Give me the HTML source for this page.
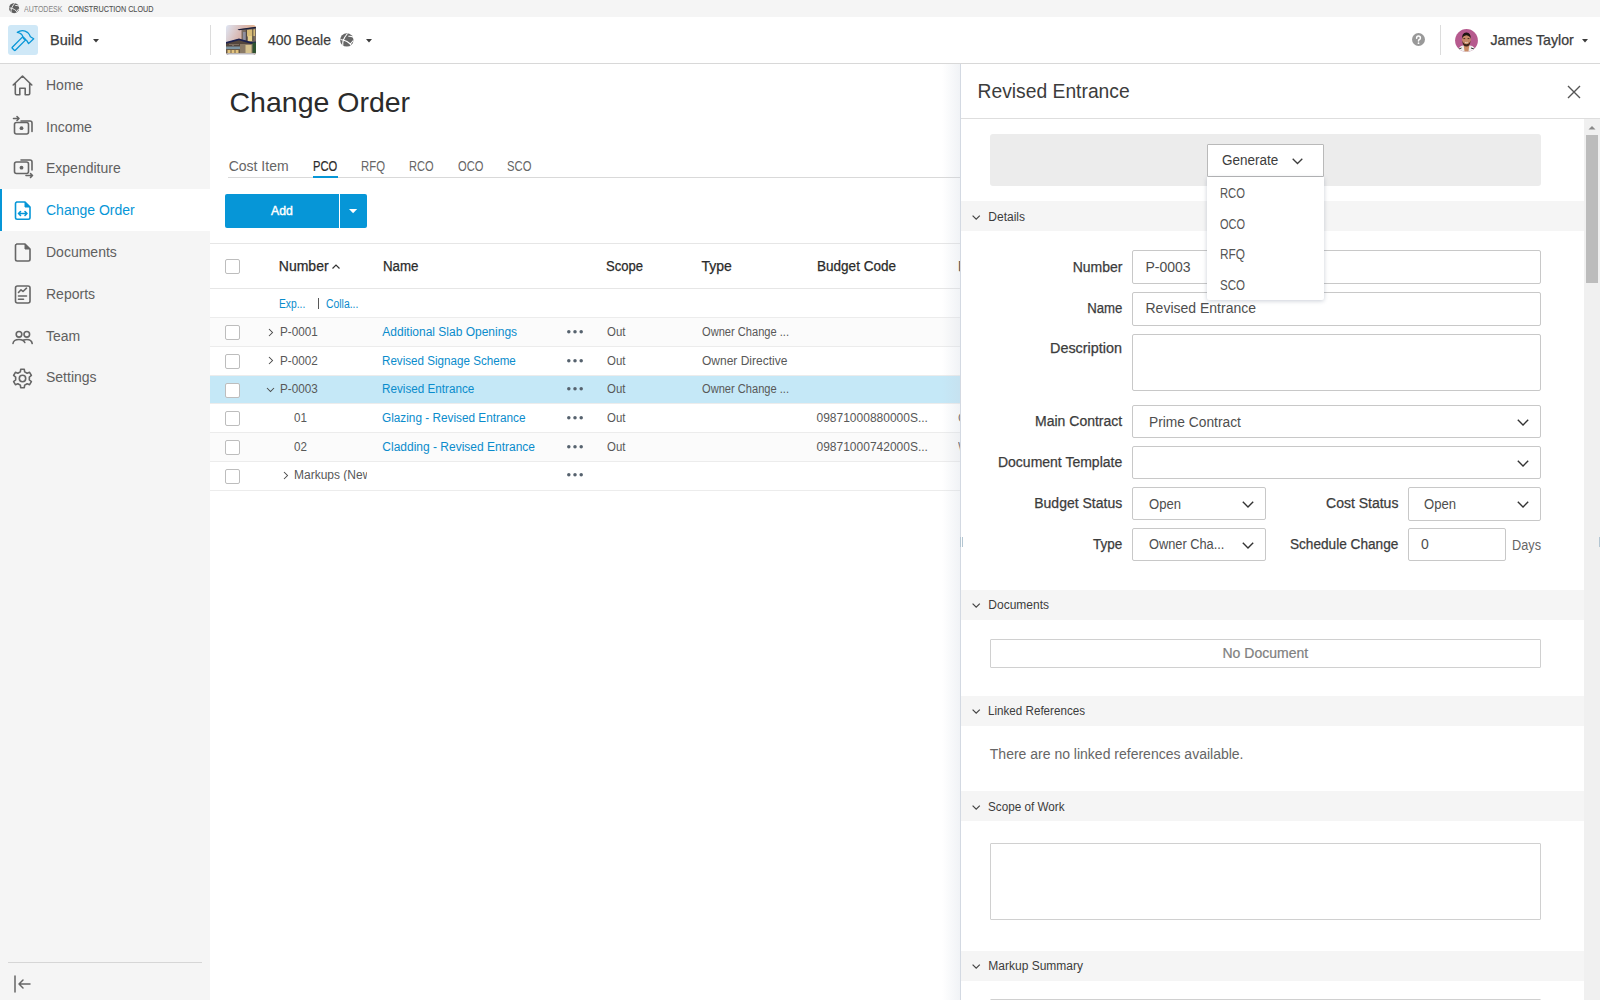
<!DOCTYPE html>
<html><head><meta charset="utf-8">
<style>
*{box-sizing:border-box;margin:0;padding:0}
html,body{width:1600px;height:1000px;overflow:hidden;background:#fff;font-family:"Liberation Sans",sans-serif;color:#3c3c3c}
.a{position:absolute}
.t{white-space:nowrap;line-height:1}
svg.a{overflow:visible}
</style></head>
<body>
<div class="a" style="left:0.00px;top:0.00px;width:1600.00px;height:17.00px;background:#f5f5f5;"></div>
<svg class="a" style="left:8.80px;top:3.00px;" width="11" height="11" viewBox="0 0 11 11"><g transform="scale(0.75)"><circle cx="6.8" cy="6.9" r="6.7" fill="#5e5e5e"/><path d="M7.5 0.5 Q4.5 4 3.2 7.5 Q2.5 10 2.8 12.5 M0.5 6.5 Q4 6.8 7 8.5 Q9.5 10 11.5 12.5 M8.3 3.3 Q11 3 13.3 4.2 M10 11.5 Q12 9 13.3 7.5" stroke="#f5f5f5" stroke-width="1.2" fill="none"/></g></svg>
<div class="a t" style="top:4.72px;font-size:8.60px;color:#858585;left:24.00px;transform:scaleX(0.8165);transform-origin:0 0;">AUTODESK</div>
<div class="a t" style="top:4.72px;font-size:8.60px;color:#505050;-webkit-text-stroke:0.10px #505050;left:67.50px;transform:scaleX(0.8401);transform-origin:0 0;">CONSTRUCTION CLOUD</div>
<div class="a" style="left:0.00px;top:17.00px;width:1600.00px;height:46.00px;background:#fff;"></div>
<div class="a" style="left:0.00px;top:63.00px;width:1600.00px;height:1.00px;background:#d8d8d8;"></div>
<div class="a" style="left:8.00px;top:25.00px;width:30.00px;height:30.00px;background:#cfe8f7;border-radius:3px;"></div>
<svg class="a" style="left:8.00px;top:25.00px;" width="30" height="30" viewBox="0 0 30 30"><path d="M4.3 22.2 L14.4 12.1 Q14.9 11.6 15.4 12.1 L17.4 14.1 Q17.9 14.6 17.4 15.1 L7.3 25.2 Q6.8 25.7 6.3 25.2 L4.3 23.2 Q3.8 22.7 4.3 22.2 Z" stroke="#0696d7" stroke-width="1.3" fill="none" stroke-linejoin="round"/><path d="M9.3 7.4 Q14.5 3.8 19.8 7.6 Q21.6 9.3 22.4 11.8 L25.7 13.8 L20.6 18.6 L18.6 15.3 Q15.4 14.8 14.9 12 Q14.2 8.3 9.3 7.4 Z" stroke="#0696d7" stroke-width="1.3" fill="none" stroke-linejoin="round"/></svg>
<div class="a t" style="top:32.83px;font-size:14.50px;color:#3c3c3c;-webkit-text-stroke:0.25px #3c3c3c;left:50.00px;">Build</div>
<svg class="a" style="left:93.00px;top:38.50px;" width="6" height="4" viewBox="0 0 6 4"><path d="M0 0 L6 0 L3 3.5 Z" fill="#3c3c3c"/></svg>
<div class="a" style="left:210.00px;top:25.00px;width:1.00px;height:30.00px;background:#dcdcdc;"></div>
<svg class="a" style="left:226.00px;top:25.00px;" width="30" height="30" viewBox="0 0 30 30"><defs><linearGradient id="sky" x1="0" y1="0" x2="1" y2="0.5"><stop offset="0" stop-color="#dfe6f4"/><stop offset="0.5" stop-color="#d9b7b0"/><stop offset="1" stop-color="#e9b27a"/></linearGradient><clipPath id="thc"><rect x="0" y="0" width="30" height="30" rx="3"/></clipPath></defs><g clip-path="url(#thc)"><rect x="0" y="0" width="30" height="30" fill="url(#sky)"/><path d="M15.5 4 L30 2 L30 17 L15.5 17 Z" fill="#7a6c62"/><path d="M21 5 L29 4.2 L29 11 L21 11.5 Z" fill="#d8bc78"/><path d="M22 11 L26.5 11 L26.5 16 L22 16 Z" fill="#e6d08a"/><path d="M17 7 L20 7 L20 15 L17 15 Z" fill="#8e8e9e"/><path d="M20.3 4.5 V16 M26.8 3.5 V16" stroke="#3a3230" stroke-width="0.8"/><path d="M11.5 4.2 L30 1.8 L30 3.3 L13 5.2 Z" fill="#1a1d3a"/><path d="M0 17.5 L13 14 L25 17.5 L30 17 L30 30 L0 30 Z" fill="#54463c"/><path d="M0 17 L13 13.5 L25 17 L30 16.5 L30 18.3 L25 18.7 L13 15.2 L0 18.8 Z" fill="#1c2250"/><path d="M3 19.5 H13 M6 20.5 H8" stroke="#9a8a7a" stroke-width="0.6"/><path d="M0 21.5 L14 21.5 L14 24 L0 24 Z" fill="#7c94a2"/><path d="M0 24 L14 24 L14 28.5 L0 28.5 Z" fill="#6a5a48"/><path d="M1.5 25 H4.5 V28 H1.5 Z M5.5 25 H8.5 V28 H5.5 Z M9.5 25 H12.5 V28 H9.5 Z" fill="#e2c27c"/><path d="M14 19 L30 19 L30 28.5 L14 28.5 Z" fill="#8a7a66"/><path d="M19.5 20 L25.5 20 L25.5 28 L19.5 28 Z" fill="#d6c28e"/><path d="M26.5 17.5 L30 17.5 L30 28 L26.5 28 Z" fill="#2f5230"/><rect x="0" y="28.3" width="30" height="1.7" fill="#dcdce2"/></g></svg>
<div class="a t" style="top:32.93px;font-size:14.50px;color:#3c3c3c;-webkit-text-stroke:0.25px #3c3c3c;left:267.50px;transform:scaleX(0.9647);transform-origin:0 0;">400 Beale</div>
<svg class="a" style="left:340.00px;top:33.00px;" width="14" height="14" viewBox="0 0 14 14"><circle cx="6.8" cy="6.9" r="6.7" fill="#666"/><path d="M7.5 0.5 Q4.5 4 3.2 7.5 Q2.5 10 2.8 12.5 M0.5 6.5 Q4 6.8 7 8.5 Q9.5 10 11.5 12.5 M8.3 3.3 Q11 3 13.3 4.2 M10 11.5 Q12 9 13.3 7.5" stroke="#fff" stroke-width="1.1" fill="none"/></svg>
<svg class="a" style="left:366.00px;top:38.50px;" width="6" height="4" viewBox="0 0 6 4"><path d="M0 0 L6 0 L3 3.5 Z" fill="#3c3c3c"/></svg>
<svg class="a" style="left:1411.50px;top:33.30px;" width="13" height="13" viewBox="0 0 13 13"><circle cx="6.5" cy="6.5" r="6.5" fill="#999"/><path d="M4.6 5.2 Q4.6 3 6.5 3 Q8.4 3 8.4 4.9 Q8.4 6.1 7.1 6.7 Q6.5 7 6.5 8" stroke="#fff" stroke-width="1.5" fill="none" stroke-linecap="round"/><circle cx="6.5" cy="10.2" r="0.9" fill="#fff"/></svg>
<div class="a" style="left:1440.00px;top:25.00px;width:1.00px;height:30.00px;background:#dcdcdc;"></div>
<svg class="a" style="left:1455.30px;top:28.70px;" width="23" height="23" viewBox="0 0 23 23"><defs><clipPath id="avc"><circle cx="11.5" cy="11.5" r="11.4"/></clipPath></defs><g clip-path="url(#avc)"><rect x="0" y="0" width="23" height="23" fill="#b65a8e"/><path d="M2.5 23 Q3.5 17 8 16.5 L15 16.5 Q20 17 21 23 Z" fill="#eef0ee"/><path d="M4 20 L6.5 19 M16 19 L19 20" stroke="#333" stroke-width="1"/><path d="M8.5 15 L14.5 15 L13.5 22.5 L9.5 22.5 Z" fill="#c98a64"/><ellipse cx="11.4" cy="10.5" rx="4.3" ry="6.2" fill="#c68a68"/><path d="M7 10 Q6.8 3.2 11.4 3.4 Q16 3.2 15.8 10 Q15 6.8 11.4 6.2 Q7.8 6.8 7 10 Z" fill="#1e1412"/><path d="M7.3 11.5 Q7.5 17.5 11.4 17.5 Q15.3 17.5 15.5 11.5 Q14.5 15 11.4 15.2 Q8.3 15 7.3 11.5 Z" fill="#3a2418"/><path d="M8.4 9.6 H10.2 M12.6 9.6 H14.4" stroke="#3a2418" stroke-width="0.9"/><path d="M10 13.3 Q11.4 14.2 12.8 13.3" stroke="#e8dcc8" stroke-width="0.9" fill="none"/></g></svg>
<div class="a t" style="top:33.18px;font-size:14.20px;color:#3c3c3c;-webkit-text-stroke:0.25px #3c3c3c;left:1490.50px;">James Taylor</div>
<svg class="a" style="left:1581.80px;top:38.50px;" width="6" height="4" viewBox="0 0 6 4"><path d="M0 0 L6 0 L3 3.5 Z" fill="#3c3c3c"/></svg>
<div class="a" style="left:0.00px;top:64.00px;width:210.00px;height:936.00px;background:#f5f5f5;"></div>
<div class="a" style="left:0.00px;top:189.30px;width:210.00px;height:42.00px;background:#fff;"></div>
<div class="a" style="left:0.00px;top:189.30px;width:2.20px;height:42.00px;background:#0696d7;"></div>
<div class="a t" style="top:77.75px;font-size:14.00px;color:#606060;left:46.00px;">Home</div>
<div class="a t" style="top:119.55px;font-size:14.00px;color:#606060;left:46.00px;">Income</div>
<div class="a t" style="top:161.35px;font-size:14.00px;color:#606060;left:46.00px;">Expenditure</div>
<div class="a t" style="top:203.15px;font-size:14.00px;color:#0696d7;left:46.00px;">Change Order</div>
<div class="a t" style="top:244.95px;font-size:14.00px;color:#606060;left:46.00px;">Documents</div>
<div class="a t" style="top:286.75px;font-size:14.00px;color:#606060;left:46.00px;">Reports</div>
<div class="a t" style="top:328.55px;font-size:14.00px;color:#606060;left:46.00px;">Team</div>
<div class="a t" style="top:370.35px;font-size:14.00px;color:#606060;left:46.00px;">Settings</div>
<svg class="a" style="left:12.40px;top:74.50px;" width="21" height="21" viewBox="0 0 21 21"><path d="M1.2 10 L10.5 1 L19.8 10 M3.3 8.2 V18.6 Q3.3 19.8 4.5 19.8 H7.8 V13.2 H13.2 V19.8 H16.5 Q17.7 19.8 17.7 18.6 V8.2" stroke="#666" stroke-width="1.6" fill="none" stroke-linejoin="round" stroke-linecap="round"/></svg>
<svg class="a" style="left:13.00px;top:116.00px;" width="21" height="20" viewBox="0 0 21 20"><rect x="1.5" y="6.5" width="14" height="11.5" rx="2" stroke="#666" stroke-width="1.6" fill="none" stroke-linejoin="round" stroke-linecap="round"/><circle cx="8.5" cy="12.2" r="1.9" fill="#666"/><path d="M8 5 H17 Q19 5 19 7 V15.5" stroke="#666" stroke-width="1.6" fill="none" stroke-linejoin="round" stroke-linecap="round"/><path d="M0.5 2.5 H6 M4 0.5 L6 2.5 L4 4.5" stroke="#666" stroke-width="1.6" fill="none" stroke-linejoin="round" stroke-linecap="round"/></svg>
<svg class="a" style="left:13.00px;top:159.30px;" width="21" height="20" viewBox="0 0 21 20"><rect x="1.5" y="3" width="14" height="11.5" rx="2" stroke="#666" stroke-width="1.6" fill="none" stroke-linejoin="round" stroke-linecap="round"/><circle cx="8.5" cy="8.7" r="1.9" fill="#666"/><path d="M8 1 H17 Q19 1 19 3 V11" stroke="#666" stroke-width="1.6" fill="none" stroke-linejoin="round" stroke-linecap="round"/><path d="M13 16.5 H19.5 M17.5 14.5 L19.5 16.5 L17.5 18.5" stroke="#666" stroke-width="1.6" fill="none" stroke-linejoin="round" stroke-linecap="round"/></svg>
<svg class="a" style="left:14.00px;top:201.00px;" width="18" height="20" viewBox="0 0 18 20"><path d="M2.5 1 H11 L16 6 V16.5 Q16 18.2 14.3 18.2 H3.2 Q1.5 18.2 1.5 16.5 V2.7 Q1.5 1 3.2 1 Z" stroke="#0696d7" stroke-width="1.6" fill="none" stroke-linejoin="round" stroke-linecap="round"/><path d="M11 1 V6 H16 Z" fill="#0696d7" stroke="#0696d7" stroke-width="1"/><path d="M4.5 12.5 H13 M6.5 10.5 L4.5 12.5 L6.5 14.5 M11 10.5 L13 12.5 L11 14.5" stroke="#0696d7" stroke-width="1.6" fill="none" stroke-linejoin="round" stroke-linecap="round"/></svg>
<svg class="a" style="left:14.00px;top:243.00px;" width="18" height="20" viewBox="0 0 18 20"><path d="M2.7 1 H11 L16 6 V16.3 Q16 18 14.3 18 H3.2 Q1.5 18 1.5 16.3 V2.7 Q1.5 1 3.2 1 Z" stroke="#666" stroke-width="1.6" fill="none" stroke-linejoin="round" stroke-linecap="round"/><path d="M11 1 V6 H16 Z" fill="#666" stroke="#666" stroke-width="1"/></svg>
<svg class="a" style="left:14.00px;top:285.00px;" width="18" height="20" viewBox="0 0 18 20"><rect x="1.5" y="1" width="14.5" height="17" rx="2" stroke="#666" stroke-width="1.6" fill="none" stroke-linejoin="round" stroke-linecap="round"/><path d="M4.5 7.5 L7 4.8 L9 6.5 L12.5 3.2 M4.5 11 H12.5 M4.5 14.3 H9.5" stroke="#666" stroke-width="1.6" fill="none" stroke-linejoin="round" stroke-linecap="round"/></svg>
<svg class="a" style="left:11.80px;top:330.00px;" width="22" height="16" viewBox="0 0 22 16"><circle cx="7" cy="4.3" r="2.8" stroke="#666" stroke-width="1.6" fill="none" stroke-linejoin="round" stroke-linecap="round"/><circle cx="14.8" cy="4.3" r="2.8" stroke="#666" stroke-width="1.6" fill="none" stroke-linejoin="round" stroke-linecap="round"/><path d="M1 13.5 Q1.5 9.5 7 9.5 Q11.5 9.5 12.8 12.5 M11.5 10 Q13 9.5 14.8 9.5 Q19.5 9.5 20.2 13.5" stroke="#666" stroke-width="1.6" fill="none" stroke-linejoin="round" stroke-linecap="round"/></svg>
<svg class="a" style="left:12.40px;top:367.60px;" width="21" height="21" viewBox="0 0 21 21"><path d="M8.34 3.84 L8.71 1.27 L12.29 1.27 L12.66 3.84 L15.18 5.30 L17.59 4.33 L19.39 7.44 L17.35 9.04 L17.35 11.96 L19.39 13.56 L17.59 16.67 L15.18 15.70 L12.66 17.16 L12.29 19.73 L8.71 19.73 L8.34 17.16 L5.82 15.70 L3.41 16.67 L1.61 13.56 L3.65 11.96 L3.65 9.04 L1.61 7.44 L3.41 4.33 L5.82 5.30 Z" stroke="#666" stroke-width="1.6" fill="none" stroke-linejoin="round" stroke-linecap="round"/><circle cx="10.5" cy="10.5" r="3.2" stroke="#666" stroke-width="1.6" fill="none" stroke-linejoin="round" stroke-linecap="round"/></svg>
<div class="a" style="left:8.00px;top:962.00px;width:194.00px;height:1.00px;background:#d6d6d6;"></div>
<svg class="a" style="left:14.00px;top:975.00px;" width="18" height="18" viewBox="0 0 18 18"><path d="M1 1 V17 M5 9 H16 M9 5 L5 9 L9 13" stroke="#666" stroke-width="1.5" fill="none" stroke-linecap="round" stroke-linejoin="round"/></svg>
<div class="a t" style="top:87.57px;font-size:28.50px;color:#2b2b2b;left:229.50px;">Change Order</div>
<div class="a" style="left:228.00px;top:177.00px;width:740.00px;height:1.00px;background:#d9d9d9;"></div>
<div class="a t" style="top:158.85px;font-size:14.00px;color:#666;left:228.70px;">Cost Item</div>
<div class="a t" style="top:158.85px;font-size:14.00px;color:#2b2b2b;-webkit-text-stroke:0.20px #2b2b2b;left:312.90px;transform:scaleX(0.8010);transform-origin:0 0;">PCO</div>
<div class="a t" style="top:158.85px;font-size:14.00px;color:#666;left:361.40px;transform:scaleX(0.8122);transform-origin:0 0;">RFQ</div>
<div class="a t" style="top:158.85px;font-size:14.00px;color:#666;left:409.40px;transform:scaleX(0.7907);transform-origin:0 0;">RCO</div>
<div class="a t" style="top:158.85px;font-size:14.00px;color:#666;left:457.80px;transform:scaleX(0.7965);transform-origin:0 0;">OCO</div>
<div class="a t" style="top:158.85px;font-size:14.00px;color:#666;left:507.00px;transform:scaleX(0.8043);transform-origin:0 0;">SCO</div>
<div class="a" style="left:312.50px;top:176.00px;width:25.00px;height:2.20px;background:#0696d7;"></div>
<div class="a" style="left:225.00px;top:194.00px;width:141.80px;height:33.60px;background:#0696d7;border-radius:2px;"></div>
<div class="a" style="left:339.00px;top:194.00px;width:1.20px;height:33.60px;background:#fff;"></div>
<div class="a t" style="top:203.97px;font-size:13.50px;color:#fff;-webkit-text-stroke:0.45px #fff;left:271.20px;transform:scaleX(0.9076);transform-origin:0 0;">Add</div>
<svg class="a" style="left:349.40px;top:208.60px;" width="9" height="5" viewBox="0 0 9 5"><path d="M0 0 L8.2 0 L4.1 4.3 Z" fill="#fff"/></svg>
<div class="a" style="left:210.00px;top:243.00px;width:750.00px;height:1.00px;background:#e6e6e6;"></div>
<div class="a" style="left:210.00px;top:288.30px;width:750.00px;height:1.00px;background:#e6e6e6;"></div>
<div class="a" style="left:210.00px;top:317.20px;width:750.00px;height:1.00px;background:#ececec;"></div>
<div class="a" style="left:225.00px;top:259.20px;width:15.00px;height:15.00px;background:#fff;border:1px solid #bdbdbd;border-radius:2px;"></div>
<div class="a t" style="top:259.45px;font-size:14.00px;color:#2b2b2b;-webkit-text-stroke:0.25px #2b2b2b;left:278.80px;">Number</div>
<svg class="a" style="left:332.00px;top:264.00px;" width="8" height="6" viewBox="0 0 8 6"><path d="M0.5 4.5 L4 1 L7.5 4.5" stroke="#333" stroke-width="1.2" fill="none"/></svg>
<div class="a t" style="top:259.45px;font-size:14.00px;color:#2b2b2b;-webkit-text-stroke:0.25px #2b2b2b;left:382.60px;transform:scaleX(0.9507);transform-origin:0 0;">Name</div>
<div class="a t" style="top:259.45px;font-size:14.00px;color:#2b2b2b;-webkit-text-stroke:0.25px #2b2b2b;left:606.30px;transform:scaleX(0.9346);transform-origin:0 0;">Scope</div>
<div class="a t" style="top:259.45px;font-size:14.00px;color:#2b2b2b;-webkit-text-stroke:0.25px #2b2b2b;left:701.50px;">Type</div>
<div class="a t" style="top:259.45px;font-size:14.00px;color:#2b2b2b;-webkit-text-stroke:0.25px #2b2b2b;left:816.50px;transform:scaleX(0.9667);transform-origin:0 0;">Budget Code</div>
<div class="a t" style="top:259.45px;font-size:14.00px;color:#2b2b2b;-webkit-text-stroke:0.25px #2b2b2b;left:958.00px;width:2.50px;overflow:hidden;">Description</div>
<div class="a t" style="top:298.34px;font-size:12.00px;color:#0a8ccc;left:278.80px;transform:scaleX(0.8573);transform-origin:0 0;">Exp...</div>
<div class="a" style="left:317.50px;top:298.00px;width:1.00px;height:10.70px;background:#585858;"></div>
<div class="a t" style="top:298.34px;font-size:12.00px;color:#0a8ccc;left:325.60px;transform:scaleX(0.8676);transform-origin:0 0;">Colla...</div>
<div class="a" style="left:210.00px;top:318.30px;width:750.00px;height:27.72px;background:#fbfbfb;"></div>
<div class="a" style="left:210.00px;top:346.02px;width:750.00px;height:1.00px;background:#ececec;"></div>
<div class="a" style="left:225.00px;top:325.30px;width:15.00px;height:15.00px;background:#fff;border:1px solid #bdbdbd;border-radius:2px;"></div>
<svg class="a" style="left:267.50px;top:327.50px;" width="6" height="9" viewBox="0 0 6 9"><path d="M1 1 L4.5 4.5 L1 8" stroke="#4a4a4a" stroke-width="1.05" fill="none"/></svg>
<div class="a t" style="top:325.84px;font-size:12.00px;color:#585858;left:279.80px;transform:scaleX(0.9769);transform-origin:0 0;">P-0001</div>
<div class="a t" style="top:325.84px;font-size:12.00px;color:#0a8ccc;left:382.30px;">Additional Slab Openings</div>
<svg class="a" style="left:567.40px;top:329.80px;" width="16" height="4" viewBox="0 0 16 4"><circle cx="1.8" cy="1.8" r="1.75" fill="#56626e"/><circle cx="8" cy="1.8" r="1.75" fill="#56626e"/><circle cx="14.2" cy="1.8" r="1.75" fill="#56626e"/></svg>
<div class="a t" style="top:325.84px;font-size:12.00px;color:#585858;left:607.10px;transform:scaleX(0.9514);transform-origin:0 0;">Out</div>
<div class="a t" style="top:325.84px;font-size:12.00px;color:#585858;left:702.00px;transform:scaleX(0.9251);transform-origin:0 0;">Owner Change ...</div>
<div class="a" style="left:210.00px;top:347.02px;width:750.00px;height:27.72px;background:#fff;"></div>
<div class="a" style="left:210.00px;top:374.74px;width:750.00px;height:1.00px;background:#ececec;"></div>
<div class="a" style="left:225.00px;top:354.02px;width:15.00px;height:15.00px;background:#fff;border:1px solid #bdbdbd;border-radius:2px;"></div>
<svg class="a" style="left:267.50px;top:356.22px;" width="6" height="9" viewBox="0 0 6 9"><path d="M1 1 L4.5 4.5 L1 8" stroke="#4a4a4a" stroke-width="1.05" fill="none"/></svg>
<div class="a t" style="top:354.56px;font-size:12.00px;color:#585858;left:279.80px;transform:scaleX(0.9769);transform-origin:0 0;">P-0002</div>
<div class="a t" style="top:354.56px;font-size:12.00px;color:#0a8ccc;left:382.30px;transform:scaleX(0.9690);transform-origin:0 0;">Revised Signage Scheme</div>
<svg class="a" style="left:567.40px;top:358.52px;" width="16" height="4" viewBox="0 0 16 4"><circle cx="1.8" cy="1.8" r="1.75" fill="#56626e"/><circle cx="8" cy="1.8" r="1.75" fill="#56626e"/><circle cx="14.2" cy="1.8" r="1.75" fill="#56626e"/></svg>
<div class="a t" style="top:354.56px;font-size:12.00px;color:#585858;left:607.10px;transform:scaleX(0.9514);transform-origin:0 0;">Out</div>
<div class="a t" style="top:354.56px;font-size:12.00px;color:#585858;left:702.00px;">Owner Directive</div>
<div class="a" style="left:210.00px;top:375.74px;width:750.00px;height:27.72px;background:#c5e8f7;"></div>
<div class="a" style="left:210.00px;top:403.46px;width:750.00px;height:1.00px;background:#ececec;"></div>
<div class="a" style="left:225.00px;top:382.74px;width:15.00px;height:15.00px;background:#fff;border:1px solid #bdbdbd;border-radius:2px;"></div>
<svg class="a" style="left:265.50px;top:386.94px;" width="9" height="6" viewBox="0 0 9 6"><path d="M1 1 L4.5 4.5 L8 1" stroke="#4a4a4a" stroke-width="1.05" fill="none"/></svg>
<div class="a t" style="top:383.28px;font-size:12.00px;color:#585858;left:279.80px;transform:scaleX(0.9769);transform-origin:0 0;">P-0003</div>
<div class="a t" style="top:383.28px;font-size:12.00px;color:#0a8ccc;left:382.30px;transform:scaleX(0.9745);transform-origin:0 0;">Revised Entrance</div>
<svg class="a" style="left:567.40px;top:387.24px;" width="16" height="4" viewBox="0 0 16 4"><circle cx="1.8" cy="1.8" r="1.75" fill="#56626e"/><circle cx="8" cy="1.8" r="1.75" fill="#56626e"/><circle cx="14.2" cy="1.8" r="1.75" fill="#56626e"/></svg>
<div class="a t" style="top:383.28px;font-size:12.00px;color:#585858;left:607.10px;transform:scaleX(0.9514);transform-origin:0 0;">Out</div>
<div class="a t" style="top:383.28px;font-size:12.00px;color:#585858;left:702.00px;transform:scaleX(0.9251);transform-origin:0 0;">Owner Change ...</div>
<div class="a" style="left:210.00px;top:404.46px;width:750.00px;height:27.72px;background:#fff;"></div>
<div class="a" style="left:210.00px;top:432.18px;width:750.00px;height:1.00px;background:#ececec;"></div>
<div class="a" style="left:225.00px;top:411.46px;width:15.00px;height:15.00px;background:#fff;border:1px solid #bdbdbd;border-radius:2px;"></div>
<div class="a t" style="top:412.00px;font-size:12.00px;color:#585858;left:293.60px;transform:scaleX(0.9666);transform-origin:0 0;">01</div>
<div class="a t" style="top:412.00px;font-size:12.00px;color:#0a8ccc;left:382.30px;transform:scaleX(0.9825);transform-origin:0 0;">Glazing - Revised Entrance</div>
<svg class="a" style="left:567.40px;top:415.96px;" width="16" height="4" viewBox="0 0 16 4"><circle cx="1.8" cy="1.8" r="1.75" fill="#56626e"/><circle cx="8" cy="1.8" r="1.75" fill="#56626e"/><circle cx="14.2" cy="1.8" r="1.75" fill="#56626e"/></svg>
<div class="a t" style="top:412.00px;font-size:12.00px;color:#585858;left:607.10px;transform:scaleX(0.9514);transform-origin:0 0;">Out</div>
<div class="a t" style="top:412.00px;font-size:12.00px;color:#585858;left:816.50px;">09871000880000S...</div>
<div class="a t" style="top:412.00px;font-size:12.00px;color:#585858;left:958.00px;width:2.50px;overflow:hidden;">C</div>
<div class="a" style="left:210.00px;top:433.18px;width:750.00px;height:27.72px;background:#fbfbfb;"></div>
<div class="a" style="left:210.00px;top:460.90px;width:750.00px;height:1.00px;background:#ececec;"></div>
<div class="a" style="left:225.00px;top:440.18px;width:15.00px;height:15.00px;background:#fff;border:1px solid #bdbdbd;border-radius:2px;"></div>
<div class="a t" style="top:440.72px;font-size:12.00px;color:#585858;left:293.60px;transform:scaleX(0.9666);transform-origin:0 0;">02</div>
<div class="a t" style="top:440.72px;font-size:12.00px;color:#0a8ccc;left:382.30px;">Cladding - Revised Entrance</div>
<svg class="a" style="left:567.40px;top:444.68px;" width="16" height="4" viewBox="0 0 16 4"><circle cx="1.8" cy="1.8" r="1.75" fill="#56626e"/><circle cx="8" cy="1.8" r="1.75" fill="#56626e"/><circle cx="14.2" cy="1.8" r="1.75" fill="#56626e"/></svg>
<div class="a t" style="top:440.72px;font-size:12.00px;color:#585858;left:607.10px;transform:scaleX(0.9514);transform-origin:0 0;">Out</div>
<div class="a t" style="top:440.72px;font-size:12.00px;color:#585858;left:816.50px;">09871000742000S...</div>
<div class="a t" style="top:440.72px;font-size:12.00px;color:#585858;left:958.00px;width:2.50px;overflow:hidden;">W</div>
<div class="a" style="left:210.00px;top:461.90px;width:750.00px;height:27.72px;background:#fff;"></div>
<div class="a" style="left:210.00px;top:489.62px;width:750.00px;height:1.00px;background:#ececec;"></div>
<div class="a" style="left:225.00px;top:468.90px;width:15.00px;height:15.00px;background:#fff;border:1px solid #bdbdbd;border-radius:2px;"></div>
<svg class="a" style="left:283.00px;top:471.10px;" width="6" height="9" viewBox="0 0 6 9"><path d="M1 1 L4.5 4.5 L1 8" stroke="#4a4a4a" stroke-width="1.05" fill="none"/></svg>
<div class="a t" style="top:469.44px;font-size:12.00px;color:#585858;left:294.00px;width:73.00px;overflow:hidden;">Markups (New</div>
<svg class="a" style="left:567.40px;top:473.40px;" width="16" height="4" viewBox="0 0 16 4"><circle cx="1.8" cy="1.8" r="1.75" fill="#56626e"/><circle cx="8" cy="1.8" r="1.75" fill="#56626e"/><circle cx="14.2" cy="1.8" r="1.75" fill="#56626e"/></svg>
<div class="a" style="left:942px;top:64px;width:19px;height:936px;background:linear-gradient(to right,rgba(200,208,220,0),rgba(200,208,220,0.28))"></div>
<div class="a" style="left:960.00px;top:64.00px;width:640.00px;height:936.00px;background:#fff;"></div>
<div class="a" style="left:960.00px;top:64.00px;width:1.20px;height:936.00px;background:#d3d9e2;"></div>
<div class="a t" style="top:81.96px;font-size:19.30px;color:#3c3c3c;left:977.50px;">Revised Entrance</div>
<svg class="a" style="left:1566.50px;top:84.50px;" width="14" height="14" viewBox="0 0 14 14"><path d="M1 1 L13 13 M13 1 L1 13" stroke="#555" stroke-width="1.4" fill="none"/></svg>
<div class="a" style="left:961.00px;top:118.20px;width:639.00px;height:1.00px;background:#dedede;"></div>
<div class="a" style="left:960.00px;top:537.00px;width:1.20px;height:9.60px;background:#b4c6d2;"></div>
<div class="a" style="left:962.00px;top:537.00px;width:1.20px;height:9.60px;background:#b4c6d2;"></div>
<div class="a" style="left:1584.00px;top:119.00px;width:16.00px;height:881.00px;background:#f0f0f0;"></div>
<div class="a" style="left:1586.00px;top:135.00px;width:12.00px;height:148.00px;background:#bcbcbc;"></div>
<svg class="a" style="left:1588.00px;top:126.00px;" width="8" height="4" viewBox="0 0 8 4"><path d="M0.5 3.6 L4 0 L7.5 3.6 Z" fill="#8a8a8a"/></svg>
<div class="a" style="left:1599.00px;top:537.00px;width:1.00px;height:9.80px;background:#b4c6d2;"></div>
<div class="a" style="left:990.00px;top:133.50px;width:550.60px;height:52.30px;background:#ececec;border-radius:3px;"></div>
<div class="a" style="left:1206.60px;top:143.50px;width:117.70px;height:33.00px;background:#fff;border:1px solid #b9b9b9;border-radius:1px;"></div>
<div class="a t" style="top:152.75px;font-size:14.00px;color:#3c3c3c;left:1222.00px;transform:scaleX(0.9629);transform-origin:0 0;">Generate</div>
<svg class="a" style="left:1292.20px;top:157.50px;" width="11" height="7" viewBox="0 0 11 7"><path d="M0.7 0.7 L5.5 5.5 L10.3 0.7" stroke="#3c3c3c" stroke-width="1.3" fill="none"/></svg>
<div class="a" style="left:961.00px;top:201.00px;width:623.00px;height:30.00px;background:#f5f5f5;"></div>
<svg class="a" style="left:972.20px;top:214.80px;" width="9" height="5" viewBox="0 0 9 5"><path d="M0.6 0.6 L4.2 4.2 L7.8 0.6" stroke="#444" stroke-width="1.2" fill="none"/></svg>
<div class="a t" style="top:210.54px;font-size:12.00px;color:#3c3c3c;left:988.30px;">Details</div>
<div class="a" style="left:1132.40px;top:250.40px;width:408.20px;height:34.10px;background:#fff;border:1px solid #c8c8c8;border-radius:2px;"></div>
<div class="a t" style="top:259.85px;font-size:14.00px;color:#3c3c3c;-webkit-text-stroke:0.25px #3c3c3c;right:477.50px;">Number</div>
<div class="a t" style="top:260.45px;font-size:14.00px;color:#4e4e4e;left:1145.50px;">P-0003</div>
<div class="a" style="left:1132.40px;top:291.50px;width:408.20px;height:34.10px;background:#fff;border:1px solid #c8c8c8;border-radius:2px;"></div>
<div class="a t" style="top:300.95px;font-size:14.00px;color:#3c3c3c;-webkit-text-stroke:0.25px #3c3c3c;right:477.50px;transform:scaleX(0.9426);transform-origin:100% 0;">Name</div>
<div class="a t" style="top:301.35px;font-size:14.00px;color:#4e4e4e;left:1145.50px;">Revised Entrance</div>
<div class="a" style="left:1132.40px;top:334.40px;width:408.20px;height:56.80px;background:#fff;border:1px solid #c8c8c8;border-radius:2px;"></div>
<div class="a t" style="top:341.45px;font-size:14.00px;color:#3c3c3c;-webkit-text-stroke:0.25px #3c3c3c;right:477.50px;transform:scaleX(1.0282);transform-origin:100% 0;">Description</div>
<div class="a" style="left:1132.40px;top:405.30px;width:408.20px;height:33.20px;background:#fff;border:1px solid #c8c8c8;border-radius:2px;"></div>
<div class="a t" style="top:413.55px;font-size:14.00px;color:#3c3c3c;-webkit-text-stroke:0.25px #3c3c3c;right:477.80px;">Main Contract</div>
<div class="a t" style="top:415.05px;font-size:14.00px;color:#4e4e4e;left:1149.40px;transform:scaleX(0.9844);transform-origin:0 0;">Prime Contract</div>
<svg class="a" style="left:1517.00px;top:419.00px;" width="12" height="7" viewBox="0 0 12 7"><path d="M0.8 0.8 L6 6 L11.2 0.8" stroke="#333" stroke-width="1.4" fill="none"/></svg>
<div class="a" style="left:1132.40px;top:446.00px;width:408.20px;height:33.40px;background:#fff;border:1px solid #c8c8c8;border-radius:2px;"></div>
<div class="a t" style="top:454.75px;font-size:14.00px;color:#3c3c3c;-webkit-text-stroke:0.25px #3c3c3c;right:477.80px;">Document Template</div>
<svg class="a" style="left:1517.00px;top:460.00px;" width="12" height="7" viewBox="0 0 12 7"><path d="M0.8 0.8 L6 6 L11.2 0.8" stroke="#333" stroke-width="1.4" fill="none"/></svg>
<div class="a" style="left:1132.40px;top:486.90px;width:133.20px;height:33.40px;background:#fff;border:1px solid #c8c8c8;border-radius:2px;"></div>
<div class="a t" style="top:495.65px;font-size:14.00px;color:#3c3c3c;-webkit-text-stroke:0.25px #3c3c3c;right:477.80px;">Budget Status</div>
<div class="a t" style="top:496.55px;font-size:14.00px;color:#4e4e4e;left:1149.00px;transform:scaleX(0.9344);transform-origin:0 0;">Open</div>
<svg class="a" style="left:1242.00px;top:501.00px;" width="12" height="7" viewBox="0 0 12 7"><path d="M0.8 0.8 L6 6 L11.2 0.8" stroke="#333" stroke-width="1.4" fill="none"/></svg>
<div class="a" style="left:1408.00px;top:487.20px;width:132.60px;height:33.40px;background:#fff;border:1px solid #c8c8c8;border-radius:2px;"></div>
<div class="a t" style="top:496.15px;font-size:14.00px;color:#3c3c3c;-webkit-text-stroke:0.25px #3c3c3c;right:201.60px;">Cost Status</div>
<div class="a t" style="top:496.55px;font-size:14.00px;color:#4e4e4e;left:1424.40px;transform:scaleX(0.9344);transform-origin:0 0;">Open</div>
<svg class="a" style="left:1517.00px;top:501.00px;" width="12" height="7" viewBox="0 0 12 7"><path d="M0.8 0.8 L6 6 L11.2 0.8" stroke="#333" stroke-width="1.4" fill="none"/></svg>
<div class="a" style="left:1132.40px;top:527.80px;width:133.20px;height:33.50px;background:#fff;border:1px solid #c8c8c8;border-radius:2px;"></div>
<div class="a t" style="top:536.95px;font-size:14.00px;color:#3c3c3c;-webkit-text-stroke:0.25px #3c3c3c;right:477.80px;transform:scaleX(0.9654);transform-origin:100% 0;">Type</div>
<div class="a t" style="top:537.25px;font-size:14.00px;color:#4e4e4e;left:1149.00px;transform:scaleX(0.9143);transform-origin:0 0;">Owner Cha...</div>
<svg class="a" style="left:1242.00px;top:542.00px;" width="12" height="7" viewBox="0 0 12 7"><path d="M0.8 0.8 L6 6 L11.2 0.8" stroke="#333" stroke-width="1.4" fill="none"/></svg>
<div class="a" style="left:1408.00px;top:528.00px;width:97.60px;height:33.40px;background:#fff;border:1px solid #c8c8c8;border-radius:2px;"></div>
<div class="a t" style="top:536.95px;font-size:14.00px;color:#3c3c3c;-webkit-text-stroke:0.25px #3c3c3c;right:201.60px;transform:scaleX(0.9739);transform-origin:100% 0;">Schedule Change</div>
<div class="a t" style="top:537.35px;font-size:14.00px;color:#4e4e4e;left:1421.00px;">0</div>
<div class="a t" style="top:537.55px;font-size:14.00px;color:#666;left:1511.60px;transform:scaleX(0.9092);transform-origin:0 0;">Days</div>
<div class="a" style="left:961.00px;top:589.60px;width:623.00px;height:30.00px;background:#f5f5f5;"></div>
<svg class="a" style="left:972.20px;top:603.40px;" width="9" height="5" viewBox="0 0 9 5"><path d="M0.6 0.6 L4.2 4.2 L7.8 0.6" stroke="#444" stroke-width="1.2" fill="none"/></svg>
<div class="a t" style="top:599.14px;font-size:12.00px;color:#3c3c3c;left:988.30px;">Documents</div>
<div class="a" style="left:989.60px;top:639.00px;width:551.00px;height:28.60px;background:#fff;border:1px solid #d0d0d0;border-radius:1px;"></div>
<div class="a t" style="top:645.75px;font-size:14.00px;color:#808080;-webkit-text-stroke:0.20px #808080;left:1265.30px;width:0;display:flex;justify-content:center;">No Document</div>
<div class="a" style="left:961.00px;top:695.60px;width:623.00px;height:30.00px;background:#f5f5f5;"></div>
<svg class="a" style="left:972.20px;top:709.40px;" width="9" height="5" viewBox="0 0 9 5"><path d="M0.6 0.6 L4.2 4.2 L7.8 0.6" stroke="#444" stroke-width="1.2" fill="none"/></svg>
<div class="a t" style="top:705.14px;font-size:12.00px;color:#3c3c3c;left:988.30px;transform:scaleX(0.9695);transform-origin:0 0;">Linked References</div>
<div class="a t" style="top:747.05px;font-size:14.00px;color:#666;left:989.80px;">There are no linked references available.</div>
<div class="a" style="left:961.00px;top:791.40px;width:623.00px;height:30.00px;background:#f5f5f5;"></div>
<svg class="a" style="left:972.20px;top:805.20px;" width="9" height="5" viewBox="0 0 9 5"><path d="M0.6 0.6 L4.2 4.2 L7.8 0.6" stroke="#444" stroke-width="1.2" fill="none"/></svg>
<div class="a t" style="top:800.94px;font-size:12.00px;color:#3c3c3c;left:988.30px;transform:scaleX(0.9748);transform-origin:0 0;">Scope of Work</div>
<div class="a" style="left:989.60px;top:843.40px;width:551.00px;height:77.00px;background:#fff;border:1px solid #d0d0d0;border-radius:1px;"></div>
<div class="a" style="left:961.00px;top:950.50px;width:623.00px;height:30.00px;background:#f5f5f5;"></div>
<svg class="a" style="left:972.20px;top:964.30px;" width="9" height="5" viewBox="0 0 9 5"><path d="M0.6 0.6 L4.2 4.2 L7.8 0.6" stroke="#444" stroke-width="1.2" fill="none"/></svg>
<div class="a t" style="top:960.04px;font-size:12.00px;color:#3c3c3c;left:988.30px;">Markup Summary</div>
<div class="a" style="left:989.60px;top:998.80px;width:551.00px;height:10.00px;background:#fff;border:1px solid #d0d0d0;border-radius:1px;"></div>
<div class="a" style="left:1206.6px;top:177.4px;width:117.7px;height:122.6px;background:#fff;box-shadow:0 1px 4px rgba(60,80,110,0.28);border-radius:0 0 2px 2px"></div>
<div class="a t" style="top:186.15px;font-size:14.00px;color:#555;left:1220.20px;transform:scaleX(0.8036);transform-origin:0 0;">RCO</div>
<div class="a t" style="top:216.60px;font-size:14.00px;color:#555;left:1220.20px;transform:scaleX(0.7840);transform-origin:0 0;">OCO</div>
<div class="a t" style="top:247.05px;font-size:14.00px;color:#555;left:1220.20px;transform:scaleX(0.8460);transform-origin:0 0;">RFQ</div>
<div class="a t" style="top:277.50px;font-size:14.00px;color:#555;left:1220.20px;transform:scaleX(0.8240);transform-origin:0 0;">SCO</div>
</body></html>
